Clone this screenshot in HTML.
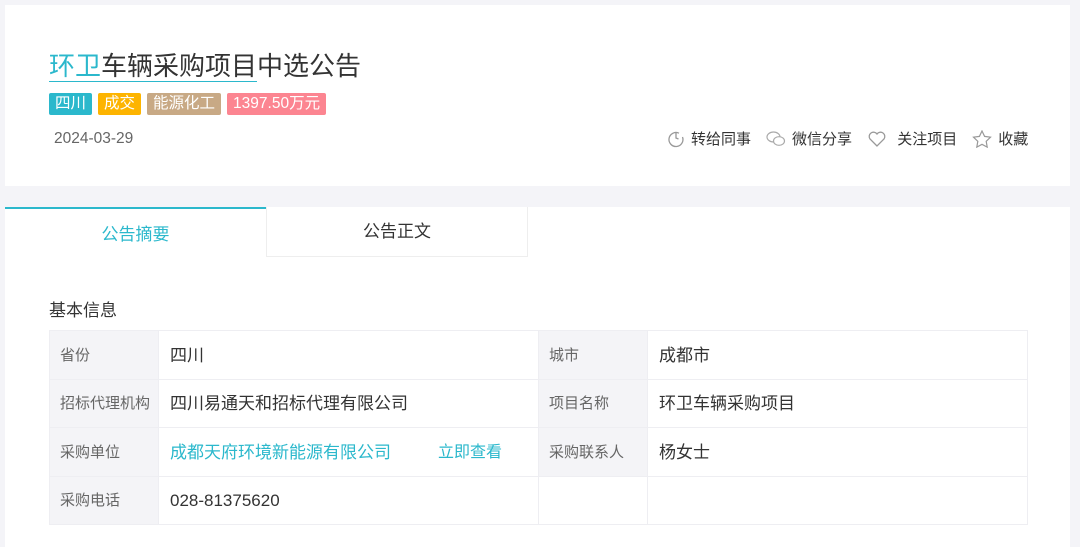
<!DOCTYPE html>
<html><head><meta charset="utf-8"><style>
*{margin:0;padding:0;box-sizing:border-box}
body{width:1080px;height:535px;overflow:hidden;background:#f4f4f8;font-family:"Liberation Sans","Noto Sans CJK SC",sans-serif;color:#333;position:relative}
.card{position:absolute;left:5px;top:5px;width:1065px;height:181px;background:#fff}
.title{position:absolute;left:49px;top:49px;font-size:26px;color:#333;line-height:34px}
.title .u{border-bottom:1px solid #2bb8cc}
.title .h{color:#2bb8cc}
.tags{position:absolute;left:49px;top:93px;display:flex;gap:6px}
.tag{height:22px;line-height:22px;padding:0 6px;color:#fff;font-size:15.5px;border-radius:2px}
.date{position:absolute;left:54px;top:130px;font-size:15.5px;color:#666}
.acts{position:absolute;left:667px;top:128px;display:flex;font-size:15px;color:#333;align-items:center}
.acts span{display:flex;align-items:center;margin-right:15px}
.acts svg{margin-right:6px}
.panel{position:absolute;left:5px;top:207px;width:1065px;height:340px;background:#fff}
.tab1{position:absolute;left:0;top:0;width:261px;height:50px;border-top:2px solid #2bb8cc;color:#2bb8cc;font-size:17px;text-align:center;line-height:52px}
.tab2{position:absolute;left:261px;top:0;width:262px;height:50px;border:1px solid #eee;border-top:none;font-size:17px;text-align:center;line-height:50px;color:#333}
.sec{position:absolute;left:49px;top:296px;font-size:17px;color:#333}
table{position:absolute;left:49px;top:330px;border-collapse:collapse;width:979px;table-layout:fixed}
td{border:1px solid #eeeef2;height:48.5px;padding:2px 11px 0;white-space:nowrap;vertical-align:middle;line-height:20px}
td.l{background:#f4f4f7;color:#666;font-size:15px;width:109px;padding:2px 10px 0}
td.v{width:380px;color:#333;font-size:17px}
a{color:#2bb8cc;text-decoration:none}
</style></head><body>
<div class="card"></div>
<div class="title"><span class="u"><span class="h">环卫</span>车辆采购项目</span>中选公告</div>
<div class="tags">
<div class="tag" style="background:#2bb8cc">四川</div>
<div class="tag" style="background:#fdb400">成交</div>
<div class="tag" style="background:#c8a985">能源化工</div>
<div class="tag" style="background:#fc8591">1397.50万元</div>
</div>
<div class="date">2024-03-29</div>
<div class="acts">
<span><svg width="18" height="18" viewBox="0 0 18 18" fill="none" stroke="#999" stroke-width="1.3"><path d="M12 3.2A7 7 0 1 0 15.5 7"/><path d="M9 3v5l2.5 1" /></svg>转给同事</span>
<span><svg width="20" height="18" viewBox="0 0 20 18" fill="none" stroke="#aaa" stroke-width="1.2"><ellipse cx="7.5" cy="7" rx="6.5" ry="5"/><ellipse cx="13" cy="11" rx="5.5" ry="4.3" fill="#fff"/></svg>微信分享</span>
<span><svg width="20" height="18" viewBox="0 0 20 18" fill="none" stroke="#999" stroke-width="1.3"><path d="M10 16L3 9A4 4 0 0 1 10 4A4 4 0 0 1 17 9Z"/></svg>&nbsp;关注项目</span>
<span><svg width="20" height="18" viewBox="0 0 20 18" fill="none" stroke="#999" stroke-width="1.2"><path d="M10 1l2.6 5.4 5.9.8-4.3 4.1 1 5.8L10 14.3 4.8 17.1l1-5.8L1.5 7.2l5.9-.8z"/></svg>收藏</span>
</div>
<div class="panel">
<div class="tab1">公告摘要</div>
<div class="tab2">公告正文</div>
</div>
<div class="sec">基本信息</div>
<table>
<tr><td class="l">省份</td><td class="v">四川</td><td class="l">城市</td><td class="v">成都市</td></tr>
<tr><td class="l">招标代理机构</td><td class="v">四川易通天和招标代理有限公司</td><td class="l">项目名称</td><td class="v">环卫车辆采购项目</td></tr>
<tr><td class="l">采购单位</td><td class="v"><a>成都天府环境新能源有限公司</a><a style="float:right;font-size:16px;margin-right:25px">立即查看</a></td><td class="l">采购联系人</td><td class="v">杨女士</td></tr>
<tr><td class="l">采购电话</td><td class="v">028-81375620</td><td class="l" style="background:#fff"></td><td class="v"></td></tr>
</table>
</body></html>
